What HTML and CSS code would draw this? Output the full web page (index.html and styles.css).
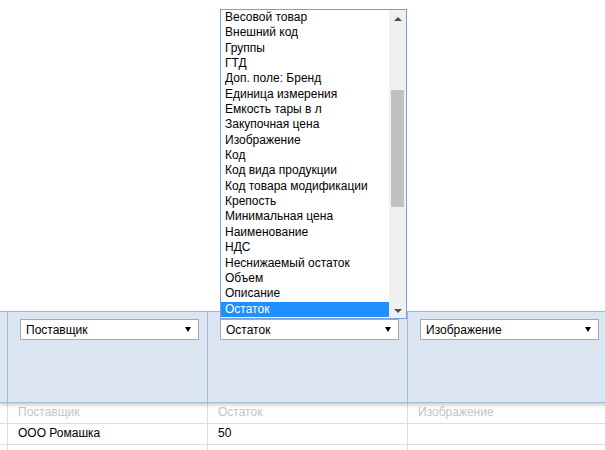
FILE: index.html
```html
<!DOCTYPE html>
<html lang="ru">
<head>
    <meta charset="UTF-8">
    <title>Колонки импорта</title>
    <link rel="stylesheet" href="styles.css">
</head>
<body>
    <div class="page">
        <div class="top-space"></div>

        <div class="grid">
            <div class="head-row">
                <div class="gutter"></div>
                <div class="head-cell">
                    <div class="select"><span>Поставщик</span><i class="arrow"></i></div>
                </div>
                <div class="head-cell">
                    <div class="select"><span>Остаток</span><i class="arrow"></i></div>
                </div>
                <div class="head-cell last">
                    <div class="select"><span>Изображение</span><i class="arrow"></i></div>
                </div>
            </div>

            <div class="row caption">
                <div class="gutter"></div>
                <div class="cell">Поставщик</div>
                <div class="cell">Остаток</div>
                <div class="cell last">Изображение</div>
            </div>
            <div class="row">
                <div class="gutter"></div>
                <div class="cell">ООО Ромашка</div>
                <div class="cell">50</div>
                <div class="cell last"></div>
            </div>
            <div class="row">
                <div class="gutter"></div>
                <div class="cell"></div>
                <div class="cell"></div>
                <div class="cell last"></div>
            </div>
        </div>

        <!-- открытый список второй колонки -->
        <div class="listbox">
            <div class="options">
                <div class="option">Весовой товар</div>
                <div class="option">Внешний код</div>
                <div class="option">Группы</div>
                <div class="option">ГТД</div>
                <div class="option">Доп. поле: Бренд</div>
                <div class="option">Единица измерения</div>
                <div class="option">Емкость тары в л</div>
                <div class="option">Закупочная цена</div>
                <div class="option">Изображение</div>
                <div class="option">Код</div>
                <div class="option">Код вида продукции</div>
                <div class="option">Код товара модификации</div>
                <div class="option">Крепость</div>
                <div class="option">Минимальная цена</div>
                <div class="option">Наименование</div>
                <div class="option">НДС</div>
                <div class="option">Неснижаемый остаток</div>
                <div class="option">Объем</div>
                <div class="option">Описание</div>
                <div class="option selected">Остаток</div>
            </div>
            <div class="scrollbar">
                <i class="scroll-up"></i>
                <div class="track"><div class="thumb"></div></div>
                <i class="scroll-down"></i>
            </div>
        </div>
    </div>
</body>
</html>
```

FILE: styles.css
```css
:root {
    --head-bg: #dce6f3; --head-border: #a8b9d2; --grid-line: #dcdcdc;
    --select-border: #a9a9a9; --list-border: #7b9ed9; --picked: #1e90ff;
}
body {
    margin: 0; background: #fff; color: #000;
    font-family: "Liberation Sans", Arial, sans-serif; font-size: 12px;
}
.page { position: relative; width: 605px; height: 450px; overflow: hidden; }
.top-space { height: 311px; }

.grid { width: 620px; }
.head-row {
    display: flex; height: 90px; background: var(--head-bg);
    border-top: 1px solid var(--head-border); border-bottom: 1px solid var(--head-border);
    box-shadow: 0 2px 4px rgba(0, 0, 0, 0.22); position: relative;
}
.gutter { width: 7px; flex-shrink: 0; }
.head-cell { width: 200px; box-sizing: border-box; border-left: 1px solid var(--head-border); padding: 7px 0 0 12px; }
.head-cell.last, .cell.last { width: 213px; }
.select {
    width: 179px; height: 21px; box-sizing: border-box; background: #fff;
    border: 1px solid var(--select-border); display: flex; align-items: center;
    justify-content: space-between; padding: 0 7px 0 5px;
}
.arrow { width: 0; height: 0; border-left: 3px solid transparent; border-right: 3px solid transparent; border-top: 5px solid #000; }

.row { display: flex; height: 20px; border-bottom: 1px solid var(--grid-line); }
.cell {
    width: 200px; box-sizing: border-box; border-left: 1px solid var(--grid-line);
    padding-left: 10px; line-height: 19px; white-space: nowrap;
}
.caption .cell { color: #c4c4c4; }

.listbox {
    position: absolute; left: 220px; top: 9px; width: 187px; height: 310px;
    box-sizing: border-box; border: 1px solid var(--list-border); background: #fff; display: flex;
}
.options { flex: 1; overflow: hidden; }
.option { height: 15.35px; line-height: 15.35px; padding-left: 4px; white-space: nowrap; }
.option.selected { background: var(--picked); color: #fff; }
.scrollbar { width: 17px; background: #f0f0f0; display: flex; flex-direction: column; align-items: center; }
.scroll-up, .scroll-down { width: 0; height: 0; border-left: 4px solid transparent; border-right: 4px solid transparent; margin: 6px 0; }
.scroll-up { border-bottom: 4px solid #505050; margin-top: 7px; }
.scroll-down { border-top: 4px solid #505050; margin-bottom: 5px; }
.track { flex: 1; width: 100%; padding-top: 63px; box-sizing: border-box; }
.thumb { width: 13px; height: 117px; margin: 0 auto; background: #c1c1c1; }
```
